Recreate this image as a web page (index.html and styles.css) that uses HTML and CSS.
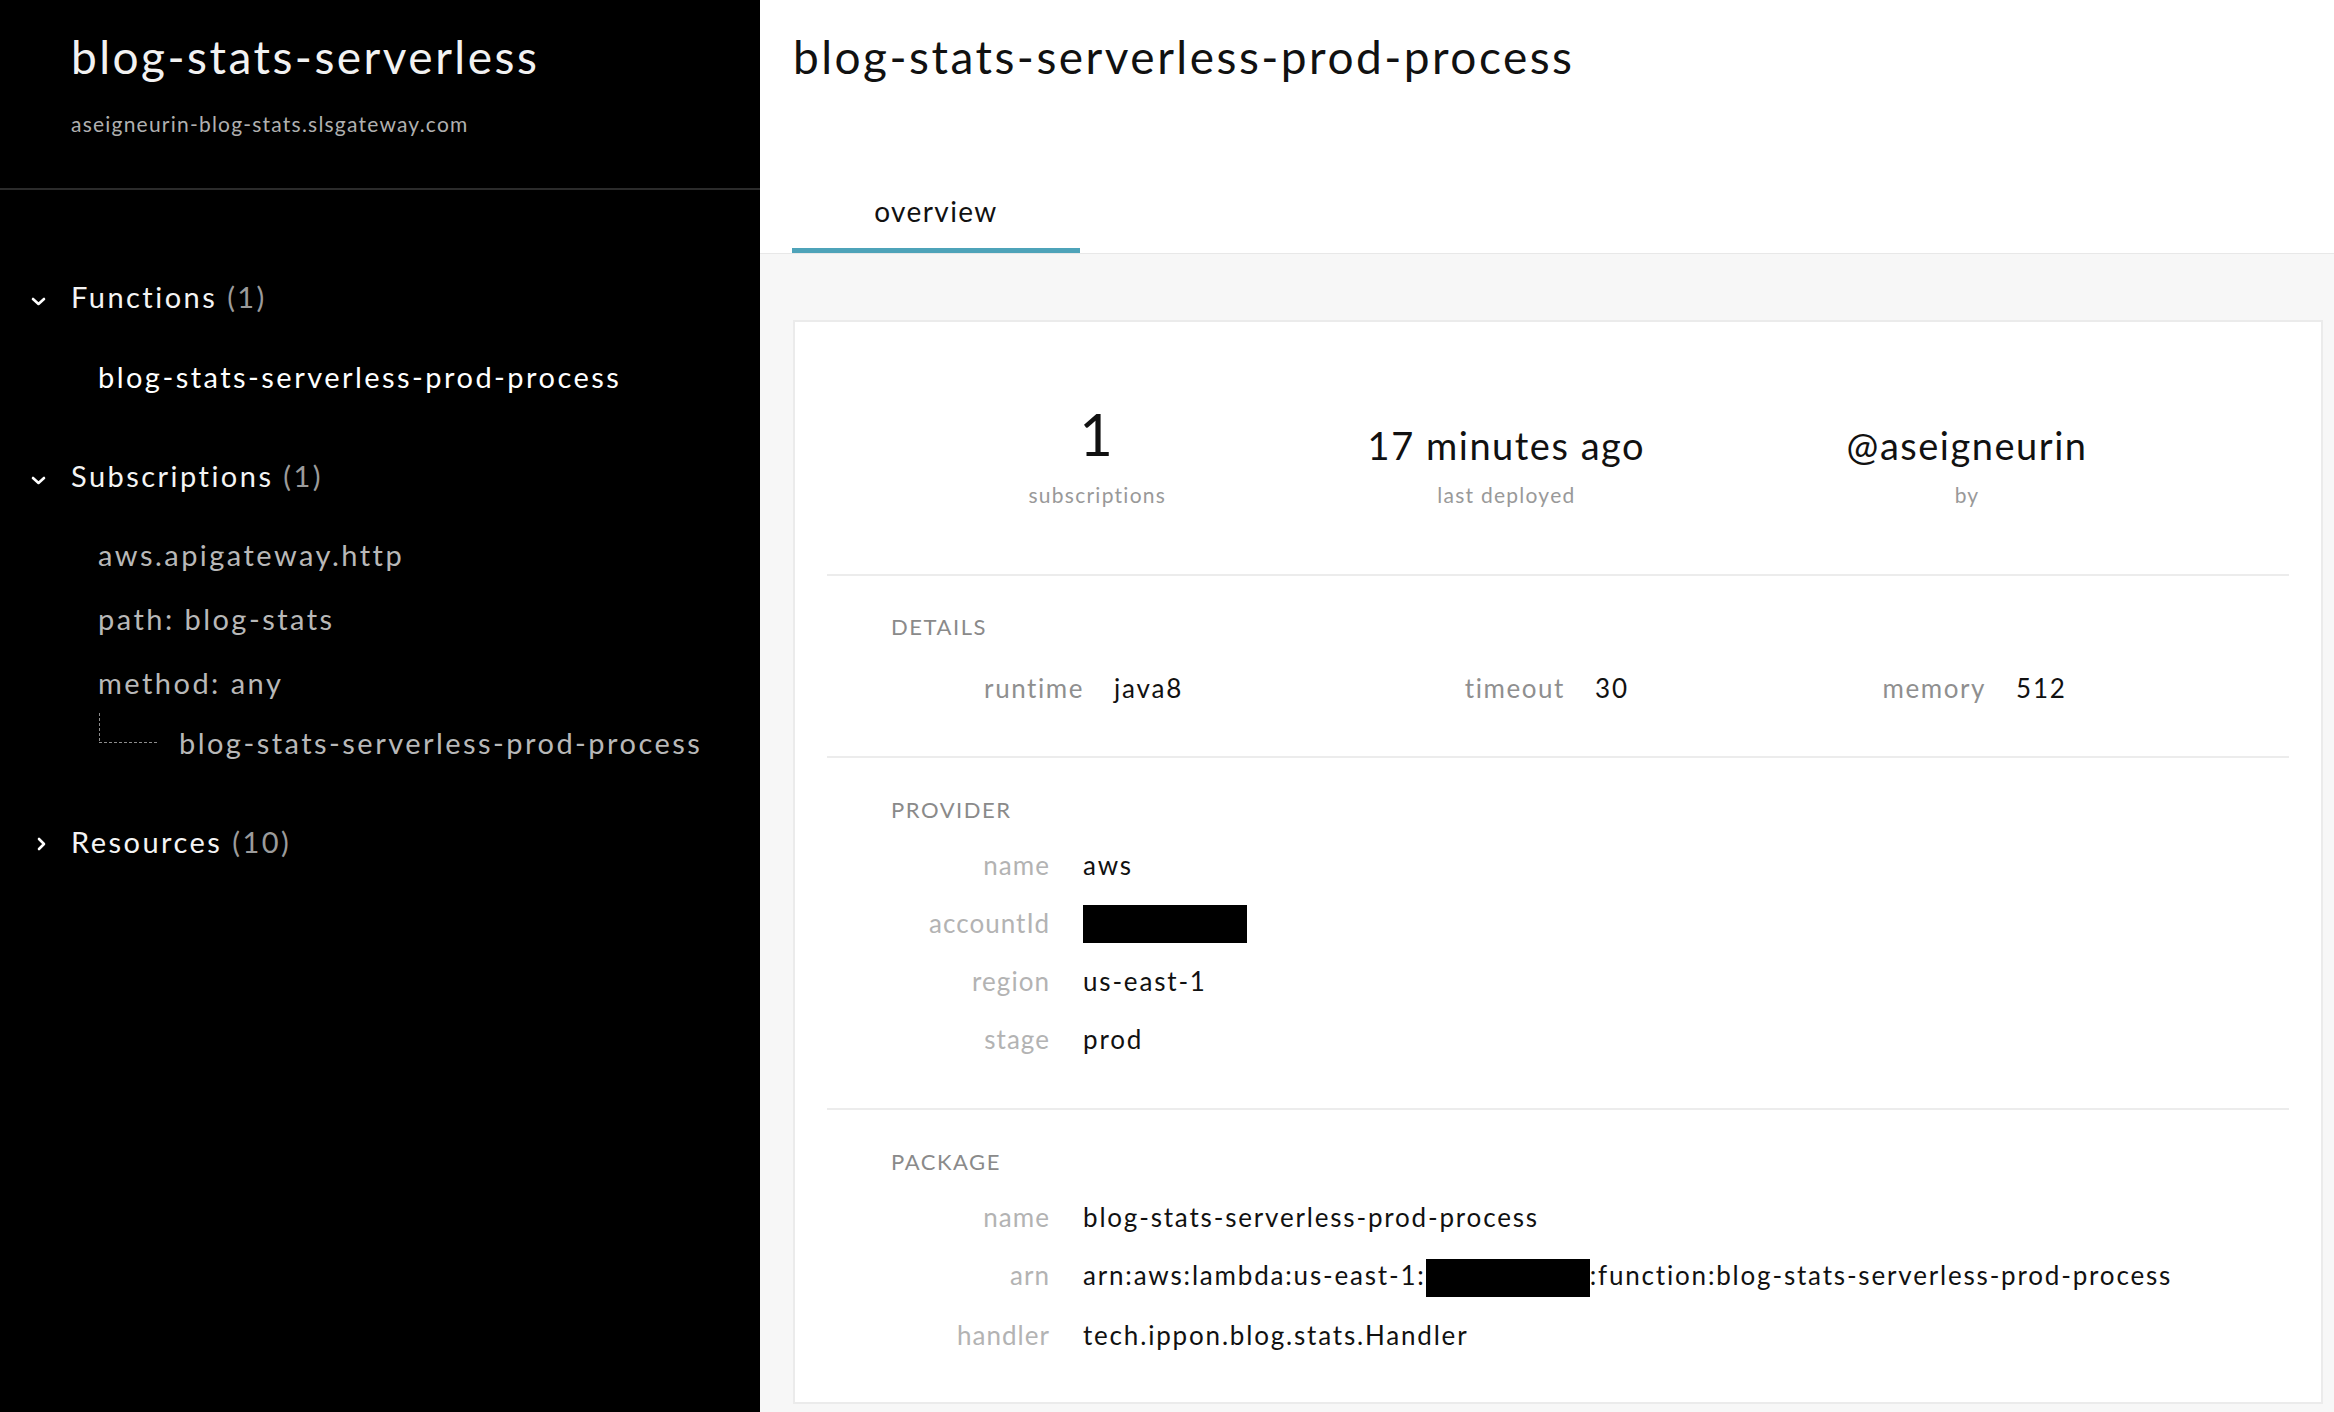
FILE: index.html
```html
<!DOCTYPE html>
<html lang="en">
<head>
<meta charset="utf-8">
<title>blog-stats-serverless-prod-process</title>
<link rel="stylesheet" href="styles.css">
</head>
<body>
<div class="app">
  <aside class="sidebar">
    <div class="side-head">
      <div class="side-title">blog-stats-serverless</div>
      <div class="side-sub">aseigneurin-blog-stats.slsgateway.com</div>
    </div>
    <nav class="nav">
      <div class="group">
        <div class="group-head">
          <span class="chev"><svg width="15" height="9" viewBox="0 0 15 9"><polyline points="2,2 7.5,7 13,2" fill="none" stroke="#fff" stroke-width="2.6" stroke-linecap="round" stroke-linejoin="round"/></svg></span>
          <span>Functions <span class="count">(1)</span></span>
        </div>
        <ul class="items items-fn">
          <li class="item item-fn">blog-stats-serverless-prod-process</li>
        </ul>
      </div>
      <div class="group">
        <div class="group-head">
          <span class="chev"><svg width="15" height="9" viewBox="0 0 15 9"><polyline points="2,2 7.5,7 13,2" fill="none" stroke="#fff" stroke-width="2.6" stroke-linecap="round" stroke-linejoin="round"/></svg></span>
          <span>Subscriptions <span class="count">(1)</span></span>
        </div>
        <ul class="items">
          <li class="item">aws.apigateway.http</li>
          <li class="item">path: blog-stats</li>
          <li class="item">method: any</li>
          <li class="item tree"><span class="connector"></span><span>blog-stats-serverless-prod-process</span></li>
        </ul>
      </div>
      <div class="group">
        <div class="group-head">
          <span class="chev chev-right"><svg width="9" height="14" viewBox="0 0 9 14"><polyline points="2,2 7,7 2,12" fill="none" stroke="#fff" stroke-width="2.6" stroke-linecap="round" stroke-linejoin="round"/></svg></span>
          <span>Resources <span class="count">(10)</span></span>
        </div>
      </div>
    </nav>
  </aside>

  <main class="main">
    <header class="main-head">
      <h1 class="page-title">blog-stats-serverless-prod-process</h1>
      <div class="tabs">
        <div class="tab">overview</div>
      </div>
    </header>
    <div class="content">
      <section class="card">
        <div class="stats">
          <div class="stat">
            <div class="stat-value big">1</div>
            <div class="stat-label">subscriptions</div>
          </div>
          <div class="stat">
            <div class="stat-value">17 minutes ago</div>
            <div class="stat-label">last deployed</div>
          </div>
          <div class="stat">
            <div class="stat-value">@aseigneurin</div>
            <div class="stat-label">by</div>
          </div>
        </div>

        <div class="section details">
          <div class="section-title">DETAILS</div>
          <div class="kv kv-details">
            <div class="k">runtime</div><div class="v">java8</div>
            <div class="k">timeout</div><div class="v">30</div>
            <div class="k">memory</div><div class="v">512</div>
          </div>
        </div>

        <div class="section provider">
          <div class="section-title">PROVIDER</div>
          <div class="kv">
            <div class="k">name</div><div class="v">aws</div>
            <div class="k">accountId</div><div class="v"><span class="redact redact-acct"></span></div>
            <div class="k">region</div><div class="v">us-east-1</div>
            <div class="k">stage</div><div class="v">prod</div>
          </div>
        </div>

        <div class="section package">
          <div class="section-title">PACKAGE</div>
          <div class="kv">
            <div class="k">name</div><div class="v">blog-stats-serverless-prod-process</div>
            <div class="k">arn</div><div class="v">arn:aws:lambda:us-east-1:<span class="redact"></span>:function:blog-stats-serverless-prod-process</div>
            <div class="k">handler</div><div class="v">tech.ippon.blog.stats.Handler</div>
          </div>
        </div>
      </section>
    </div>
  </main>
</div>
</body>
</html>
```

FILE: styles.css
```css
* { box-sizing: border-box; }
html, body { margin: 0; padding: 0; }
body {
  font-family: Lato, "Noto Sans", sans-serif;
  overflow: hidden;
  background: #f7f7f7;
}
.app { display: flex; height: 1412px; }

/* sidebar */
.sidebar { width: 760px; flex: none; background: #000; color: #f2f2f2; }
.side-head { padding: 29px 0 50px 71px; border-bottom: 2px solid #2b2b2b; }
.side-title { font-size: 46px; line-height: 56px; letter-spacing: 0.054em; }
.side-sub { margin-top: 25px; font-size: 21px; line-height: 28px; color: #b0b0b0; letter-spacing: 0.058em; }
.nav { padding-top: 86px; }
.group { margin-bottom: 58px; }
.group-head { display: flex; align-items: center; height: 40px; font-size: 29px; letter-spacing: 0.085em; color: #f4f4f4; }
.chev { width: 71px; flex: none; display: flex; justify-content: center; padding-top: 10px; padding-left: 6px; }
.chev-right { padding-top: 6px; padding-left: 11px; }
.count { color: #9b9b9b; }
.items { list-style: none; margin: 0; padding: 40px 0 0 98px; display: flex; flex-direction: column; gap: 24px; }
.items-fn { padding-top: 41px; }
.item { font-size: 29px; line-height: 40px; letter-spacing: 0.085em; color: #b8b8b8; }
.item-fn { color: #fff; }
.tree { display: flex; margin-top: -4px; }
.connector {
  flex: none; width: 60px; height: 30px; margin-top: -10px; margin-right: 20px; margin-left: 1px;
  background:
    repeating-linear-gradient(to bottom, #8c8c8c 0 3px, transparent 3px 5px) left top / 1px 100% no-repeat,
    repeating-linear-gradient(to right, #8c8c8c 0 3px, transparent 3px 5px) left bottom / 100% 1px no-repeat;
}

/* main */
.main { flex: 1; min-width: 0; display: flex; flex-direction: column; background: #f7f7f7; }
.main-head { background: #fff; padding: 29px 0 0 33px; border-bottom: 1px solid #e8e8e8; }
.page-title { margin: 0; font-weight: 400; font-size: 46px; line-height: 56px; color: #111; letter-spacing: 0.054em; }
.tabs { margin-top: 106px; display: flex; }
.tab {
  width: 288px; margin-left: -1px; text-align: center; font-size: 28px; line-height: 40px;
  padding-bottom: 17px; border-bottom: 5px solid #4ea3b9; color: #111; letter-spacing: 0.05em;
}
.content { flex: 1; padding: 66px 11px 0 33px; }
.card { background: #fff; border: 2px solid #ebebeb; padding: 0 32px; }

.stats { display: flex; justify-content: space-evenly; align-items: flex-end; padding: 77px 0 66px; }
.stat { display: flex; flex-direction: column; align-items: center; }
.stat-value { font-size: 38px; line-height: 1.2; color: #111; letter-spacing: 0.04em; }
.stat-value.big { font-size: 58px; }
.stat-label { margin-top: 13px; font-size: 21px; line-height: 26px; color: #999; letter-spacing: 0.06em; }

.section { border-top: 2px solid #ececec; padding: 37px 0 47px 64px; }
.section-title { font-size: 22px; line-height: 30px; color: #8a8a8a; letter-spacing: 0.07em; }
.details { padding: 36px 0 48px 64px; }
.provider { padding-bottom: 49px; }
.kv {
  display: grid; grid-template-columns: 159px 1fr; column-gap: 33px; row-gap: 18px;
  margin-top: 20px; font-size: 26px; line-height: 40px; letter-spacing: 0.07em;
}
.kv .k { text-align: right; color: #b3b3b3; letter-spacing: 0.04em; }
.kv .v { color: #111; white-space: nowrap; }
.kv-details { grid-template-columns: 193px 221px 200px 161px 200px 1fr; column-gap: 30px; margin-top: 26px; }
.kv-details .k { color: #8f8f8f; letter-spacing: 0.06em; }
.redact { display: inline-block; width: 164px; height: 38px; background: #000; vertical-align: middle; }
.redact-acct { vertical-align: -10px; }
```
